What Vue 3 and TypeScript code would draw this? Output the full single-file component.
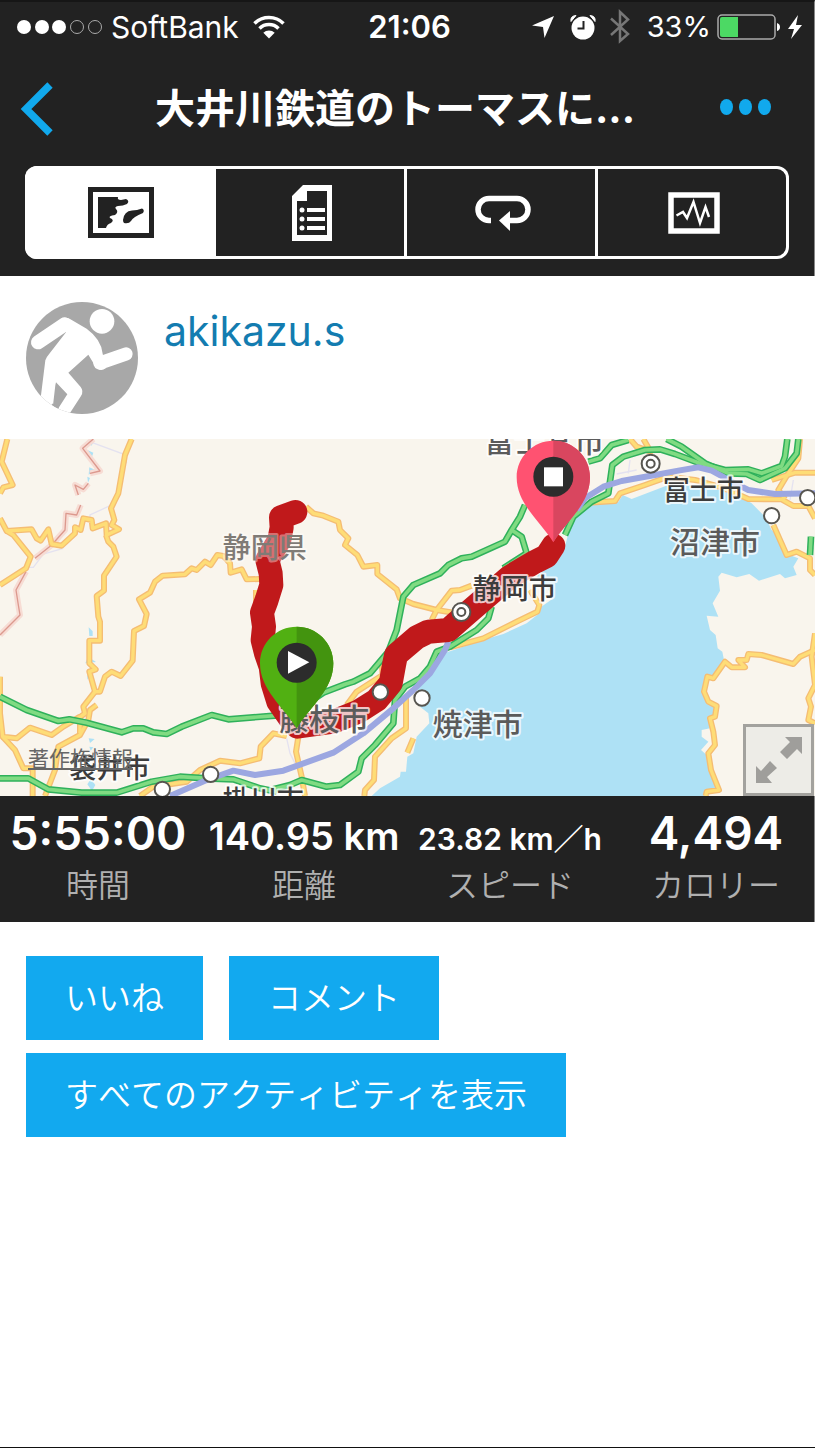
<script setup lang="ts">
import { ref } from 'vue'

interface Stat { value: string; label: string; size: string }
interface Label { text: string; x: number; y: number; size: number; tone: string }

const activeTab = ref('map')

const stats: Stat[] = [
  { value: '5:55:00', label: '時間', size: 'large' },
  { value: '140.95 km', label: '距離', size: 'medium' },
  { value: '23.82 km／h', label: 'スピード', size: 'small' },
  { value: '4,494', label: 'カロリー', size: 'large' },
]

const roads: string[] = [
  '22,27 5,95 38,165 10,172 0,190',
  '395,27 375,75 355,190 345,210 333,235 343,270 335,285 357,298 320,315 318,280 278,295 275,270 250,265 242,300 225,292 225,310 185,347 155,342 145,298 122,332 110,325 95,298 20,303 0,265',
  '20,303 40,315 92,380 78,415 0,465',
  '318,315 325,335 340,350 350,380 312,437 312,482 290,498 295,560 300,575 300,632 268,632 268,700 287,718 268,725 285,785 250,830 255,850 235,865',
  '285,785 300,785 315,740 335,725 362,738 398,692 402,603 432,588 440,552 417,508 450,488 465,455 488,437 555,433 575,415 590,420 615,395 632,405 652,375 670,378 690,400 692,428 725,418 740,448 780,447',
  '290,825 270,840 265,870 240,915 175,950 165,1020 135,1098',
  '240,865 240,910',
  '0,740 0,850 8,920 50,925 90,893 155,915 190,890 240,860',
  '8,920 45,960 70,1015 98,1015 98,1098',
  '420,1098 460,1070 560,1055 600,1020 660,992 720,1000 778,985 782,950 820,910 860,918',
  '768,480 768,520',
  '918,230 940,250 970,257 1015,275 1020,300 1045,325 1035,345 1072,375 1090,410 1132,405 1132,432 1190,478 1200,505 1240,522 1310,540 1360,548',
  '1295,570 1310,540 1355,482 1380,480 1415,467',
  '1350,652 1450,625 1550,575 1612,545 1618,525 1590,480',
  '1145,690 1148,735 1070,785 1040,825',
  '895,920 888,965 905,1040 915,1098',
  '1218,800 1218,895 1175,925 1125,980 1122,1050 1095,1080 1093,1098',
  '1240,925 1222,968',
  '1890,27 1910,50 1952,65 1930,27',
  '1765,218 1845,213 1860,190 1935,165 2005,140 2085,150 2165,172 2245,207 2345,208 2380,228 2425,228 2445,265',
  '2315,150 2385,128 2445,128',
  '2400,27 2395,85 2362,135 2335,180 2355,208',
  '2320,285 2360,375 2390,365 2430,385 2430,420 2445,435',
  '2445,660 2400,680 2380,702 2285,675 2245,672 2240,690 2215,690 2235,712 2195,712 2175,695 2140,745 2122,740 2112,785 2125,815 2150,828 2145,860 2130,865 2140,905 2145,945 2125,970 2133,1020 2157,1080 2120,1085 2117,1098',
  '2445,610 2435,680 2445,765 2425,805 2433,830 2425,870 2445,880',
]

const highways: string[] = [
  '0,800 80,840 175,873 208,868 260,878 365,907 400,895 430,895 460,907 500,912 545,890 635,855 685,868 835,856 900,835 970,788 1035,763 1060,755 1110,730 1165,665 1190,600 1210,500 1240,465 1320,430 1345,405 1385,385 1415,380 1515,335 1535,300 1560,260 1575,225',
  '1535,300 1565,320 1580,370 1510,415',
  '1475,530 1465,565 1430,600 1350,650 1310,665 1290,710 1260,745 1215,770 1185,810 1180,880 1125,945 1085,985 1075,1025 1020,1065 980,1070 905,1050 870,1065 820,1078',
  '0,1045 85,1045 145,1078 245,1088 350,1088 455,1055 540,1040 620,1045 700,1048 780,1075 830,1085',
  '1695,315 1720,260 1775,215 1825,190 1837,105 1870,80 1935,60 1980,58 2025,72 2095,98 2175,120 2245,118 2285,130 2345,108 2355,80 2362,27',
  '2000,27 2045,50 2115,100 2185,130 2240,132 2280,150 2355,115 2390,70 2395,27',
  '1765,95 1800,85 1835,45 1885,30',
  '2433,320 2430,375',
]

const railways: string[] = [
  '510,1098 620,1050 700,1022 765,1035 850,1022 1000,968 1090,910 1180,835 1240,780 1290,730 1335,660 1345,635',
  '1730,240 1755,205 1810,170 1865,153 1965,135 2035,122 2095,112 2135,122 2205,160 2245,180 2325,192 2445,190',
]

const borders: string[] = [
  '280,27 248,55 300,123 270,130',
  '265,160 250,178 225,165 235,195',
  '242,225 230,255 198,250 195,300 155,345 105,385',
  '78,425 48,480 55,525 60,555 0,615',
]

const stations: [number, number][] = [
  [487, 1078], [632, 1033], [1141, 786], [1266, 804], [2315, 257], [2423, 203],
]
const cities: [number, number][] = [[1384, 546], [1952, 101]]

const labels: Label[] = [
  { text: '富士宮市', x: 1453, y: 65, size: 90, tone: 'soft' },
  { text: '富士市', x: 1988, y: 211, size: 81, tone: 'strong' },
  { text: '沼津市', x: 2010, y: 369, size: 90, tone: 'soft' },
  { text: '静岡県', x: 668, y: 385, size: 84, tone: 'faint' },
  { text: '静岡市', x: 1418, y: 508, size: 84, tone: 'strong' },
  { text: '焼津市', x: 1298, y: 914, size: 90, tone: 'soft' },
  { text: '藤枝市', x: 838, y: 899, size: 90, tone: 'soft' },
  { text: '袋井市', x: 208, y: 1044, size: 81, tone: 'strong' },
  { text: '掛川市', x: 668, y: 1139, size: 81, tone: 'strong' },
]
</script>

<template>
  <div class="page">
    <header class="top">
      <div class="status">
        <div class="carrier">
          <svg class="signal" viewBox="0 0 87 16" width="87" height="16" aria-hidden="true">
            <circle cx="8" cy="8" r="7" fill="#fff" />
            <circle cx="26" cy="8" r="7" fill="#fff" />
            <circle cx="43" cy="8" r="7" fill="#fff" />
            <circle cx="61" cy="8" r="6.5" fill="none" stroke="#aaa" />
            <circle cx="79" cy="8" r="6.5" fill="none" stroke="#aaa" />
          </svg>
          <span>SoftBank</span>
          <svg class="wifi" viewBox="0 0 32 24" width="32" height="24" aria-label="Wi-Fi">
            <g fill="none" stroke="#fff" stroke-width="3.500">
              <path d="M1.500 8.500A20.500 20.500 0 0 1 30.500 8.500" />
              <path d="M6.500 13.500A13.500 13.500 0 0 1 25.500 13.500" />
            </g>
            <path d="M16 23.500L10.300 17.800A8.200 8.200 0 0 1 21.700 17.800Z" fill="#fff" />
          </svg>
        </div>
        <time class="clock">21:06</time>
        <div class="indicators">
          <svg viewBox="0 0 24 24" width="24" height="24" aria-hidden="true">
            <path d="M23 1L13.500 23L12 12L1 10.500Z" fill="#fff" />
          </svg>
          <svg class="alarm" viewBox="0 0 26 26" width="26" height="26" aria-hidden="true">
            <circle cx="13" cy="14" r="11.500" fill="#fff" />
            <path d="M1 7.500Q0 2 6 1.500Z M25 7.500Q26 2 20 1.500Z" fill="#fff" stroke="#fff" />
            <path d="M13.500 7V14.500H7.500" fill="none" stroke="#222" stroke-width="2" />
          </svg>
          <svg class="bluetooth" viewBox="0 0 22 36" width="22" height="36" aria-hidden="true">
            <path d="M2 9.500L19 25L11 32V3L19 10.500L2 26" fill="none" stroke="#777" stroke-width="2.500" />
          </svg>
          <span class="percent">33%</span>
          <svg class="battery" viewBox="0 0 64 28" width="64" height="28" aria-hidden="true">
            <rect x="1" y="2" width="57" height="24" rx="4" fill="none" stroke="#aaa" stroke-width="1.500" />
            <path d="M5 4H21V24H5Q3 24 3 22V6Q3 4 5 4Z" fill="#4cd964" />
            <path d="M60 10Q63 11 63 14Q63 17 60 18Z" fill="#fff" />
          </svg>
          <svg class="bolt" viewBox="0 0 16 26" width="16" height="26" aria-hidden="true">
            <path d="M11 1L1 15H7L4 25L15 11H9Z" fill="#fff" />
          </svg>
        </div>
      </div>

      <div class="nav">
        <button type="button" class="back" aria-label="戻る">
          <svg viewBox="0 0 34 54" width="34" height="54">
            <path d="M30 3L6 27L30 51" fill="none" stroke="#11a9ed" stroke-width="7.500" />
          </svg>
        </button>
        <h1>大井川鉄道のトーマスに...</h1>
        <button type="button" class="more" aria-label="その他">
          <svg viewBox="0 0 52 18" width="52" height="18">
            <g fill="#11a9ed">
              <ellipse cx="6.500" cy="9" rx="6.500" ry="8" />
              <ellipse cx="25.500" cy="9" rx="6.500" ry="8" />
              <ellipse cx="44.500" cy="9" rx="6.500" ry="8" />
            </g>
          </svg>
        </button>
      </div>

      <nav class="tabs">
        <button type="button" :class="{ active: activeTab === 'map' }" aria-label="地図" @click="activeTab = 'map'">
          <svg viewBox="0 0 66 51" width="66" height="51">
            <rect x="2.500" y="2.500" width="61" height="46" fill="none" stroke="currentColor" stroke-width="5" />
            <path d="M10 10H30Q29 13 33 13L38 12Q42 14 39 17Q35 19 30 19Q26 20 28 22Q31 25 27 28Q20 29 22 31Q27 33 23 36Q19 37 18 41H10Z" fill="currentColor" />
            <path d="M35 33Q36 24 44 23.500L49 23L54 21.500Q57 23 55 26Q45 30 43 34Q41 37 36 36Q35 35 35 33Z" fill="currentColor" />
          </svg>
        </button>
        <button type="button" :class="{ active: activeTab === 'details' }" aria-label="詳細" @click="activeTab = 'details'">
          <svg viewBox="0 0 42 58" width="42" height="58">
            <path fill-rule="evenodd" d="M12 1H41V57H1V12Z M16 7V17H6V51H36V7Z" fill="currentColor" />
            <g fill="currentColor">
              <circle cx="11" cy="26" r="2.500" /><rect x="16" y="24" width="18" height="4" />
              <circle cx="11" cy="35" r="2.500" /><rect x="16" y="33" width="18" height="4" />
              <circle cx="11" cy="44" r="2.500" /><rect x="16" y="42" width="18" height="4" />
            </g>
          </svg>
        </button>
        <button type="button" :class="{ active: activeTab === 'laps' }" aria-label="ラップ" @click="activeTab = 'laps'">
          <svg viewBox="0 0 56 38" width="56" height="38">
            <path d="M16 26.500H14A11 11 0 0 1 14 4.500H42A11 11 0 0 1 42 26.500H32" fill="none" stroke="currentColor" stroke-width="5.500" />
            <path d="M24 26.500L35 17V37Z" fill="currentColor" />
          </svg>
        </button>
        <button type="button" :class="{ active: activeTab === 'charts' }" aria-label="グラフ" @click="activeTab = 'charts'">
          <svg viewBox="0 0 52 42" width="52" height="42">
            <rect x="3" y="3" width="46" height="36" fill="none" stroke="currentColor" stroke-width="5.500" />
            <path d="M8.500 23.500L15 20L19 26L25.500 10L32 31L37.500 15L41 25" fill="none" stroke="currentColor" stroke-width="2.500" />
          </svg>
        </button>
      </nav>
    </header>

    <section class="profile">
      <svg class="avatar" viewBox="0 0 336 336" width="112" height="112" aria-hidden="true">
        <defs><clipPath id="avatar-clip"><circle cx="168" cy="168" r="168" /></clipPath></defs>
        <g clip-path="url(#avatar-clip)">
          <rect width="336" height="336" fill="#a8a8a8" />
          <circle cx="228" cy="58" r="37" fill="#fff" />
          <path d="M36 121L116 67" stroke="#fff" stroke-width="42" stroke-linecap="round" />
          <path d="M222 183L300 156" stroke="#fff" stroke-width="40" stroke-linecap="round" />
          <path d="M106 50Q120 44 132 51L182 80Q226 112 230 155L240 198Q222 212 208 193L187 158L127 212L164 255Q174 268 165 282L130 336H86L124 277L90 241L88 250L78 336H38L58 175Q61 165 70 155L120 91Z" fill="#fff" />
          <path d="M78 307L97 320" stroke="#a8a8a8" stroke-width="6" />
        </g>
      </svg>
      <a href="#profile" class="user">akikazu.s</a>
    </section>

    <section class="map">
      <svg class="canvas" viewBox="0 27 2445 1071" role="img" aria-label="ルート地図">
        <rect y="27" width="2445" height="1071" fill="#f9f5ed" />
        <path fill="#aee1f5" d="M1735 245L1765 225L1855 215L1868 195L1895 207L2005 165L2090 165L2205 190L2255 220L2295 260L2315 300L2340 320L2355 370L2395 385L2380 410L2390 435L2355 445L2340 432L2277 452L2248 432L2210 442L2165 428L2155 440L2160 482L2138 520L2155 560L2120 557L2130 600L2147 615L2153 655L2167 665L2172 690L2140 745L2120 745L2110 785L2125 820L2145 830L2140 860L2125 865L2130 895L2105 900L2105 920L2125 935L2103 960L2120 975L2135 1040L2150 1080L2120 1098H1115L1140 1075L1200 1040L1202 1025L1218 1025L1222 980L1240 970L1250 920L1288 880L1285 850L1260 830L1250 790L1265 740L1300 700L1330 670L1355 662L1430 635L1510 612L1580 580L1618 550L1622 532L1660 505L1640 470L1610 440L1665 390L1695 350L1705 310Z" />
        <g fill="#aee1f5">
          <path d="M258 35h24l-8 12zM262 60l18 8-4 12zM268 112l18 8-20 14zM262 140l8 4-6 14zM266 592l12 12v14h-10zM264 680l24 16-32 4zM262 735l6 4-6 10zM266 925l18 2-14 12zM268 950l12 2-8 10zM270 1035v16l-8 12 14 20 10-18-10-14z" />
        </g>
        <g fill="none" stroke="#e4e2f0" stroke-width="4">
          <path d="M275 37L370 72L380 100M330 227L270 255V275M190 355L130 372L100 412H70M860 925L870 970L885 1000M1885 130L1890 90M2380 150L2370 210M1850 132L1910 120" />
        </g>
        <g fill="none" stroke-linejoin="round">
          <polyline v-for="p in borders" :key="p" :points="p" stroke="#f7dcd4" stroke-width="18" />
          <polyline v-for="p in borders" :key="'c' + p" :points="p" stroke="#dc998e" stroke-width="4" />
          <polyline v-for="p in roads" :key="p" :points="p" stroke="#f5bd73" stroke-width="18" />
          <polyline v-for="p in roads" :key="'c' + p" :points="p" stroke="#fedd77" stroke-width="10" />
          <polyline v-for="p in highways" :key="p" :points="p" stroke="#2fb15b" stroke-width="20" />
          <polyline v-for="p in highways" :key="'c' + p" :points="p" stroke="#80db82" stroke-width="11" />
          <polyline v-for="p in railways" :key="p" :points="p" stroke="#9ca7e1" stroke-width="18" />
          <polyline
            points="886,246 843,262 845,292 838,330 802,390 812,430 814,465 800,510 786,548 792,590 788,630 798,670 812,710 818,760 835,815 870,865 892,890 1000,875 1075,845 1130,810 1172,760 1182,705 1188,675 1250,622 1285,605 1345,600 1390,560 1460,500 1530,440 1600,398 1640,378 1660,347"
            stroke="#c0191b" stroke-width="72" stroke-linecap="round" />
        </g>
        <g fill="#fff" stroke="#575550" stroke-width="6">
          <circle v-for="[x, y] in stations" :key="x" :cx="x" :cy="y" r="23" />
          <g v-for="[x, y] in cities" :key="x">
            <circle :cx="x" :cy="y" r="27" />
            <circle :cx="x" :cy="y" r="12" />
          </g>
        </g>
        <text v-for="l in labels" :key="l.text" :x="l.x" :y="l.y" :font-size="l.size" :class="['place', l.tone]">{{ l.text }}</text>
        <g transform="translate(1660 32)">
          <path d="M0 0C60 0 110 48 110 110C110 190 40 240 0 305C-40 240 -110 190 -110 110C-110 48 -60 0 0 0Z" fill="#ff5271" />
          <path d="M0 0C60 0 110 48 110 110C110 190 40 240 0 305Z" fill="#d9465f" />
          <circle cy="108" r="60" fill="#2c2c2c" />
          <rect x="-28" y="80" width="57" height="57" fill="#fff" />
        </g>
        <g transform="translate(890 590)">
          <path d="M0 0C60 0 110 48 110 110C110 190 40 240 0 305C-40 240 -110 190 -110 110C-110 48 -60 0 0 0Z" fill="#51b012" />
          <path d="M0 0C60 0 110 48 110 110C110 190 40 240 0 305Z" fill="#43940f" />
          <circle cy="108" r="60" fill="#2c2c2c" />
          <path d="M-26 73L38 107L-26 141Z" fill="#fff" />
        </g>
      </svg>
      <a href="#copyright" class="copyright">著作権情報</a>
      <button type="button" class="expand" aria-label="地図を拡大">
        <svg viewBox="0 0 48 48" width="48" height="48" fill="#9f9e9b">
          <path d="M30 1H47V18L42 13L32 23L25 16L35 6Z" />
          <path d="M1 30L6 35L15 25L22 32L12 41L17 47H1Z" />
        </svg>
      </button>
    </section>

    <section class="stats">
      <dl>
        <div v-for="s in stats" :key="s.label" class="stat">
          <dt>{{ s.label }}</dt>
          <dd :class="s.size">{{ s.value }}</dd>
        </div>
      </dl>
    </section>

    <section class="actions">
      <button type="button">いいね</button>
      <button type="button">コメント</button>
      <button type="button">すべてのアクティビティを表示</button>
    </section>
  </div>
</template>

<style>
body {
  margin: 0;
  background: #fff;
}
</style>

<style scoped>
.page {
  box-sizing: border-box;
  min-height: 100vh;
  border-bottom: 1px solid #111;
  background: #fff;
  font-family: Inter, "Noto Sans CJK JP", sans-serif;
}
button {
  margin: 0;
  padding: 0;
  border: 0;
  border-radius: 0;
  background: none;
  font-family: inherit;
  cursor: pointer;
}
svg {
  display: block;
  flex: none;
}
.top {
  box-sizing: border-box;
  padding-bottom: 17px;
  border-top: 2px solid #161616;
  border-right: 1px solid #888;
  background: #222;
  color: #fff;
}
.status {
  display: grid;
  grid-template-columns: 1fr auto 1fr;
  align-items: center;
  height: 50px;
  padding: 0 11px 0 16px;
  font-size: 30px;
  line-height: 36px;
}
.carrier,
.indicators {
  display: flex;
  align-items: center;
}
.carrier {
  gap: 8px;
}
.wifi {
  margin-left: 6px;
}
.clock {
  font-size: 31px;
  font-weight: 600;
}
.indicators {
  justify-content: flex-end;
}
.alarm {
  margin-left: 15px;
}
.bluetooth {
  margin-left: 13px;
}
.percent {
  margin-left: 16px;
  font-size: 29px;
}
.battery {
  margin-left: 6px;
}
.bolt {
  margin-left: 6px;
}
.nav {
  display: flex;
  align-items: center;
  justify-content: space-between;
  height: 114px;
  padding: 0 42px 0 20px;
}
.more {
  padding-bottom: 4px;
}
h1 {
  margin: 0;
  padding-left: 16px;
  font-size: 40px;
  font-weight: 700;
  line-height: 56px;
  white-space: nowrap;
}
.tabs {
  display: flex;
  height: 93px;
  margin: 0 25px;
  overflow: hidden;
  border-radius: 12px;
  box-shadow: inset 0 0 0 3px #fff;
}
.tabs button {
  display: flex;
  flex: 1;
  align-items: center;
  justify-content: center;
  color: #fff;
}
.tabs button:not(:last-child) {
  box-shadow: inset -3px 0 0 #fff;
}
.tabs button.active {
  background: #fff;
  color: #222;
}
.profile {
  display: flex;
  align-items: flex-start;
  gap: 26px;
  padding: 26px 26px 25px;
}
.user {
  color: #137cb0;
  font-size: 41px;
  line-height: 58px;
  text-decoration: none;
}
.map {
  position: relative;
}
.canvas {
  width: 100%;
  height: auto;
}
.place {
  font-weight: 500;
  stroke: #fff;
  stroke-opacity: 0.75;
  stroke-width: 12px;
  stroke-linejoin: round;
  paint-order: stroke;
}
.strong {
  fill: #3c3c3c;
}
.soft {
  fill: #5b5b5b;
}
.faint {
  fill: #7f7b76;
  stroke-opacity: 0.4;
}
.copyright {
  position: absolute;
  bottom: 22px;
  left: 28px;
  color: #666;
  font-size: 21px;
  line-height: 30px;
}
.expand {
  position: absolute;
  right: 1px;
  bottom: 0;
  display: flex;
  align-items: center;
  justify-content: center;
  box-sizing: border-box;
  width: 71px;
  height: 72px;
  border: 3px solid #a3a29e;
  background: rgba(236, 235, 231, 0.95);
}
.stats {
  overflow: hidden;
  border-right: 1px solid #888;
  background: #222;
}
dl {
  display: grid;
  grid-template-columns: repeat(4, 1fr);
  margin: 0 -5px;
  padding: 9px 0 13px;
}
.stat {
  display: flex;
  flex-direction: column-reverse;
  align-items: center;
}
dt {
  color: #b0b0b0;
  font-size: 32px;
  font-weight: 350;
  font-kerning: none;
  line-height: 46px;
}
dd {
  display: flex;
  align-items: baseline;
  min-height: 58px;
  margin: 0;
  color: #fff;
  font-weight: 600;
  line-height: 48px;
  white-space: nowrap;
}
dd::before {
  height: 45px;
  content: "";
}
.large {
  font-size: 46px;
}
.medium {
  font-size: 38px;
}
.small {
  font-size: 30px;
}
.actions {
  display: flex;
  flex-wrap: wrap;
  gap: 13px 26px;
  padding: 34px 26px;
}
.actions button {
  height: 84px;
  padding: 0 39px 4px;
  background: #12a9ef;
  color: #fff;
  font-size: 33px;
  font-weight: 350;
  font-kerning: none;
}
</style>
